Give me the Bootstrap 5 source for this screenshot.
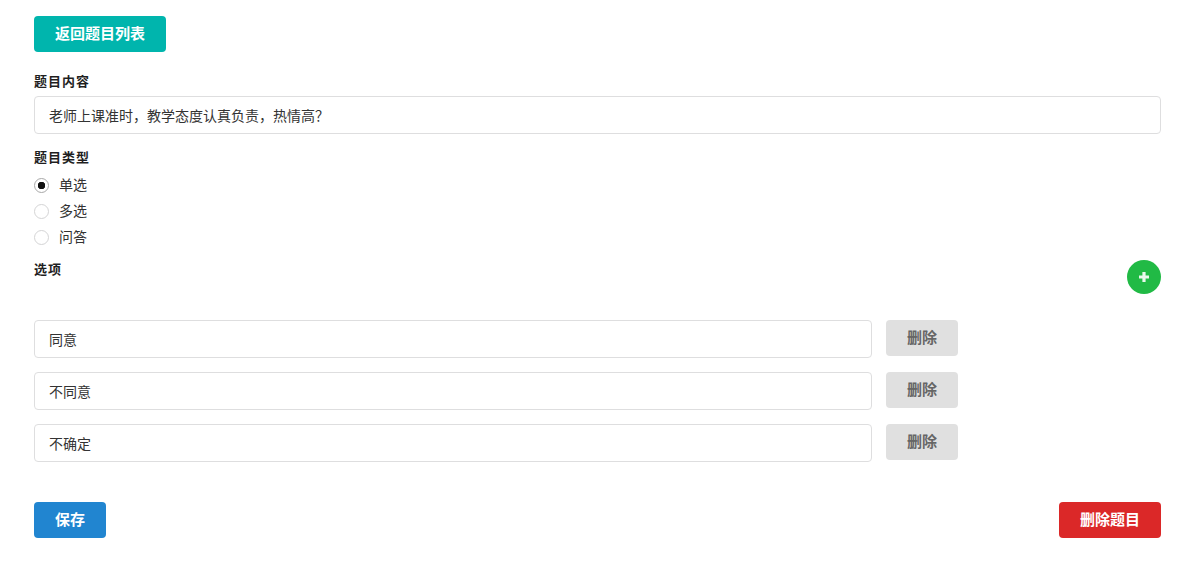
<!DOCTYPE html>
<html lang="zh">

<head>
    <meta charset="UTF-8" />
    <title>编辑题目</title>
    <link href="https://cdn.jsdelivr.net/npm/bootstrap@5.3.3/dist/css/bootstrap.min.css" rel="stylesheet">
    <style>
        body {
            font-family: "Liberation Sans", "Noto Sans CJK SC", sans-serif;
            font-size: 14px;
            color: #333;
            padding: 16px 24px 0 34px;
        }

        .act-btn {
            height: 36px;
            padding: 0 21px;
            font-size: 15px;
            font-weight: 700;
            line-height: 36px;
            border: 0;
            border-radius: 4px;
            color: #fff;
        }

        .act-teal { background: #00b5ad; }
        .act-blue { background: #2185d0; }
        .act-red { background: #db2828; }
        .act-grey { background: #e0e0e0; color: #666; width: 72px; padding: 0; flex-shrink: 0; }

        .field-label {
            display: block;
            font-size: 13px;
            font-weight: 700;
            letter-spacing: 1px;
            line-height: 14px;
            color: #1f1f1f;
            margin-bottom: 7px;
        }

        .label-content { margin-top: 23px; }
        .label-type { margin-top: 17px; }
        .label-options { margin-top: 3px; }

        .field-input {
            height: 38px;
            padding: 0 14px;
            font-family: "Noto Sans CJK SC", sans-serif;
            font-size: 14px;
            color: #333;
            border: 1px solid #dededf;
            border-radius: 4px;
        }

        .radio-row {
            display: flex;
            align-items: center;
            gap: 10px;
            height: 26px;
            margin: 0;
        }

        .radio-row .form-check-input {
            width: 15px;
            height: 15px;
            margin: 0;
            border: 1px solid #d4d4d5;
        }

        .radio-row .form-check-input:checked {
            background-color: #fff;
            border-color: #a8a8a8;
            background-image: radial-gradient(circle, #111 0 3.5px, transparent 4px);
        }

        .options-head { margin-top: 10px; }

        .add-btn {
            width: 34px;
            height: 34px;
            padding: 0;
            border: 0;
            background: #21ba45;
        }

        .opt-list {
            margin-top: 26px;
            gap: 14px;
        }

        .opt-row {
            max-width: 924px;
            align-items: flex-start;
            gap: 14px;
        }

        .form-foot { margin-top: 40px; }
    </style>
</head>

<body>

    <button type="button" class="btn act-btn act-teal d-block">返回题目列表</button>

    <form>
        <label class="field-label label-content">题目内容</label>
        <input type="text" class="form-control field-input" value="老师上课准时，教学态度认真负责，热情高？">

        <label class="field-label label-type">题目类型</label>
        <div class="radio-row">
            <input class="form-check-input" type="radio" name="qtype" id="r1" checked>
            <label for="r1">单选</label>
        </div>
        <div class="radio-row">
            <input class="form-check-input" type="radio" name="qtype" id="r2">
            <label for="r2">多选</label>
        </div>
        <div class="radio-row">
            <input class="form-check-input" type="radio" name="qtype" id="r3">
            <label for="r3">问答</label>
        </div>

        <div class="d-flex justify-content-between align-items-start options-head">
            <label class="field-label label-options">选项</label>
            <button type="button" class="btn rounded-circle add-btn d-flex align-items-center justify-content-center" aria-label="添加">
                <svg width="12" height="12" viewBox="0 0 12 12"><path d="M4.4 1h3.2v3.4H11v3.2H7.6V11H4.4V7.6H1V4.4h3.4z" fill="#e9f8ec"/></svg>
            </button>
        </div>

        <div class="d-flex flex-column opt-list">
            <div class="d-flex opt-row">
                <input type="text" class="form-control field-input" value="同意">
                <button type="button" class="btn act-btn act-grey">删除</button>
            </div>
            <div class="d-flex opt-row">
                <input type="text" class="form-control field-input" value="不同意">
                <button type="button" class="btn act-btn act-grey">删除</button>
            </div>
            <div class="d-flex opt-row">
                <input type="text" class="form-control field-input" value="不确定">
                <button type="button" class="btn act-btn act-grey">删除</button>
            </div>
        </div>

        <div class="d-flex justify-content-between form-foot">
            <button type="button" class="btn act-btn act-blue">保存</button>
            <button type="button" class="btn act-btn act-red">删除题目</button>
        </div>
    </form>

    <script src="https://cdn.jsdelivr.net/npm/bootstrap@5.3.3/dist/js/bootstrap.bundle.min.js"></script>
</body>

</html>
